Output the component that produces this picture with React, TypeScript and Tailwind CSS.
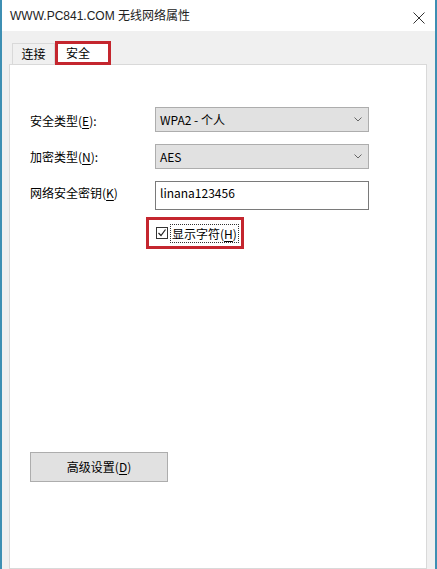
import React from 'react';

const font = { fontFamily: "'Noto Sans CJK SC', 'Noto Sans', sans-serif" };

const Key: React.FC<{ k: string }> = ({ k }) => (
  <>
    (<span className="underline underline-offset-2">{k}</span>)
  </>
);

const Chevron: React.FC = () => (
  <svg width="8" height="5" viewBox="0 0 8 5" className="shrink-0">
    <path d="M0.5 0.5 L4 4 L7.5 0.5" fill="none" stroke="#666" strokeWidth="1" />
  </svg>
);

const SelectBox: React.FC<{ value: string }> = ({ value }) => (
  <div className="w-[214px] h-[25px] flex items-center justify-between pl-[4px] pr-[6px] bg-[#e1e1e1] border border-[#adadad] text-[12px] text-black">
    <span>{value}</span>
    <Chevron />
  </div>
);

const App: React.FC = () => {
  return (
    <div
      className="w-[437px] h-[569px] overflow-hidden flex flex-col bg-white border-x-2 border-[#3d8fb3] text-black"
      style={font}
    >
      {/* Title bar */}
      <div className="h-[31px] shrink-0 flex items-center justify-between pl-[8px] pr-[10px] bg-white">
        <span className="text-[12px] text-[#222]" style={{ fontFamily: "'Liberation Sans', 'Noto Sans CJK SC', sans-serif" }}>
          WWW.PC841.COM 无线网络属性
        </span>
        <svg width="12" height="12" viewBox="0 0 12 12" className="mt-[4px]">
          <path d="M0.5 0.5 L11.5 11.5 M11.5 0.5 L0.5 11.5" stroke="#333" strokeWidth="1" />
        </svg>
      </div>

      {/* Body */}
      <div className="flex-1 flex flex-col bg-[#f0f0f0] pt-[9px] pl-[7px] pr-[8px]">
        {/* Tabs */}
        <div className="flex items-end h-[24px] pl-[3px] relative z-10">
          <div className="h-[21px] w-[43px] flex items-center justify-center border border-b-0 border-[#d9d9d9] bg-[#f0f0f0] text-[12px]">
            连接
          </div>
          <div className="h-[24px] w-[56px] -mb-[1px] flex items-center pl-[8px] bg-white border-[3px] border-[#c4262e] text-[12px]">
            安全
          </div>
        </div>

        {/* Panel */}
        <div className="flex-1 bg-white border border-[#d9d9d9] pt-[42px] pl-[20px]">
          <div className="flex flex-col gap-[12px]">
            <div className="flex items-center">
              <span className="w-[125px] text-[12px] pt-[3px]">安全类型<Key k="E" />:</span>
              <SelectBox value="WPA2 - 个人" />
            </div>
            <div className="flex items-center">
              <span className="w-[125px] text-[12px]">加密类型<Key k="N" />:</span>
              <SelectBox value="AES" />
            </div>
            <div className="flex items-start">
              <span className="w-[125px] text-[12px] pt-[3px]">网络安全密钥<Key k="K" /></span>
              <div className="w-[214px] h-[29px] pl-[4px] pt-[2px] bg-white border border-[#7a7a7a] text-[12px]">
                linana123456
              </div>
            </div>
          </div>

          {/* Show characters */}
          <div className="mt-[7px] ml-[116px] w-[98px] h-[32px] flex items-center pl-[7px] gap-[2px] border-[3px] border-[#c4262e]">
            <div className="w-[12px] h-[12px] border border-[#333] bg-white flex items-center justify-center">
              <svg width="10" height="10" viewBox="0 0 10 10">
                <path d="M1.5 5 L4 7.5 L8.5 1.5" fill="none" stroke="#222" strokeWidth="1.2" />
              </svg>
            </div>
            <span className="text-[12px] leading-[17px] px-[1px] border border-dotted border-[#333]">
              显示字符<Key k="H" />
            </span>
          </div>

          {/* Advanced */}
          <button className="mt-[203px] w-[138px] h-[30px] bg-[#e1e1e1] border border-[#adadad] text-[12px] flex items-center justify-center">
            高级设置<Key k="D" />
          </button>
        </div>
      </div>
    </div>
  );
};

export default App;
